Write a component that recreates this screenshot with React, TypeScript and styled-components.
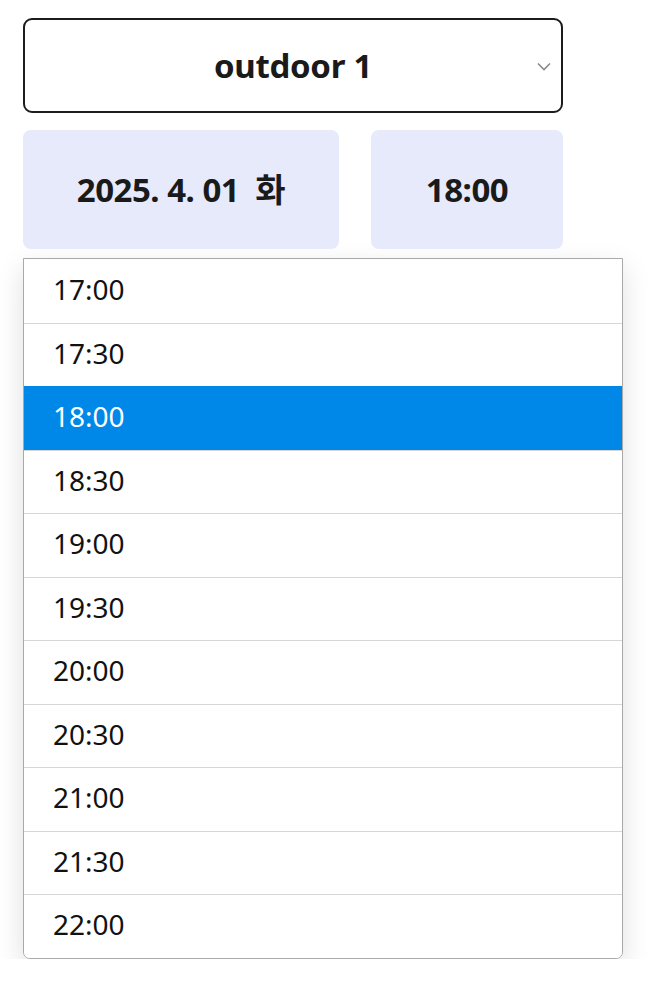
import React, { useState } from 'react'
import styled, { createGlobalStyle } from 'styled-components'

const GlobalStyle = createGlobalStyle`
  html, body {
    margin: 0;
    background: #ffffff;
    font-family: 'Noto Sans', 'Noto Sans CJK KR', sans-serif;
    color: #1a1a1a;
  }
`

const Page = styled.div`
  padding: 18px 0 0 23px;
  width: 600px;
`

const SelectBox = styled.div`
  box-sizing: border-box;
  width: 540px;
  height: 95px;
  border: 2px solid #1c1c1c;
  border-radius: 9px;
  display: flex;
  align-items: center;
  justify-content: center;
  position: relative;
  font-size: 33px;
  font-weight: 700;
  letter-spacing: -0.3px;
  line-height: 1;
`

const Chevron = styled.svg`
  position: absolute;
  right: 10px;
  top: 42px;
`

const PickerRow = styled.div`
  display: flex;
  gap: 32px;
  margin-top: 17px;
  width: 540px;
`

const Pill = styled.div<{ $w: number }>`
  width: ${({ $w }) => $w}px;
  height: 119px;
  border-radius: 8px;
  background: #e7eafa;
  display: flex;
  align-items: center;
  justify-content: center;
  font-size: 33px;
  font-weight: 700;
  letter-spacing: -0.5px;
  white-space: pre;
  line-height: 1;
`

const Menu = styled.ul`
  list-style: none;
  margin: 9px 0 0;
  padding: 0;
  box-sizing: border-box;
  width: 600px;
  border: 1px solid #a9a9a9;
  border-radius: 0 0 7px 7px;
  background: #fff;
  overflow: hidden;
  box-shadow: 0 10px 28px rgba(0, 0, 0, 0.13);
`

const Option = styled.li<{ $active: boolean }>`
  height: 63.5px;
  box-sizing: border-box;
  display: flex;
  align-items: center;
  padding: 0 0 4px 29px;
  font-size: 28px;
  line-height: 1;
  color: ${({ $active }) => ($active ? '#ffffff' : '#111')};
  background: ${({ $active }) => ($active ? '#0088e8' : '#fff')};
  border-top: 1px solid ${({ $active }) => ($active ? '#0088e8' : '#d6d6d6')};
  &:first-child {
    border-top: none;
  }
`

const times = ['17:00', '17:30', '18:00', '18:30', '19:00', '19:30', '20:00', '20:30', '21:00', '21:30', '22:00']

export default function App() {
  const [time, setTime] = useState('18:00')
  return (
    <Page>
      <GlobalStyle />
      <SelectBox>
        outdoor 1
        <Chevron width="14" height="9" viewBox="0 0 14 9">
          <path d="M1 1.5 L7 7.5 L13 1.5" fill="none" stroke="#8a8a8a" strokeWidth="1.6" />
        </Chevron>
      </SelectBox>
      <PickerRow>
        <Pill $w={316}>{'2025. 4. 01  화'}</Pill>
        <Pill $w={192}>{time}</Pill>
      </PickerRow>
      <Menu>
        {times.map((t) => (
          <Option key={t} $active={t === time} onClick={() => setTime(t)}>
            {t}
          </Option>
        ))}
      </Menu>
    </Page>
  )
}
